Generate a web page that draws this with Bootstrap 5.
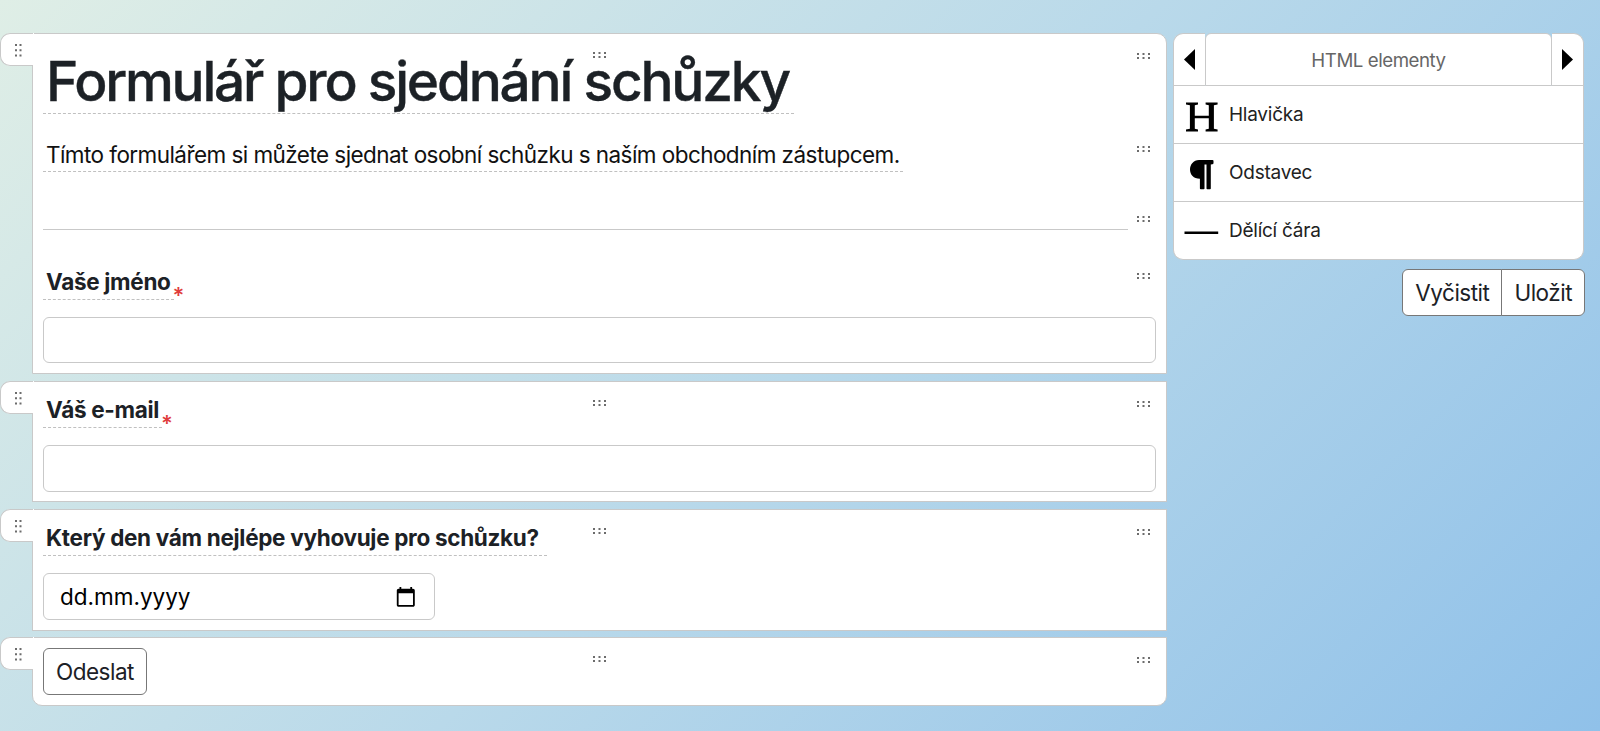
<!DOCTYPE html>
<html lang="cs">
<head>
    <meta charset="UTF-8">
    <meta name="viewport" content="width=device-width, initial-scale=1.0">
    <link href="https://cdn.jsdelivr.net/npm/bootstrap@5.3.2/dist/css/bootstrap.min.css" rel="stylesheet"/>
    <script src="https://cdn.jsdelivr.net/npm/bootstrap@5.3.2/dist/js/bootstrap.bundle.min.js"></script>
    <title>Formulář pro sjednání schůzky</title>
    <style>
        body {
            height: 731px;
            overflow: hidden;
            font-family: Inter, "Liberation Sans", sans-serif;
            font-size: 22.5px;
            color: #1c2126;
            background: linear-gradient(135deg, #dfeee6 0%, #b9d9ea 50%, #90c1e9 100%);
        }
        .builder {
            padding: 33px 16px 0 32px;
            gap: 6px;
        }
        .stage {
            width: 1135px;
        }
        .stage-row {
            position: relative;
            background: #fff;
            border: 1px solid #c9c9c9;
            padding: 0 10px;
            margin-bottom: 7px;
        }
        .stage-row:first-child { border-top-right-radius: 10px; height: 341px; }
        .stage-row:last-child { border-radius: 0 0 10px 10px; height: 69px; margin-bottom: 0; }
        .stage-row:nth-child(2) { height: 121px; }
        .stage-row:nth-child(3) { height: 122px; margin-bottom: 6px; }
        .row-tab {
            position: absolute;
            left: -33px;
            top: -1px;
            width: 33px;
            height: 33px;
            background: #fff;
            border: 1px solid #c9c9c9;
            border-right: 0;
            border-radius: 10px 0 0 10px;
            box-shadow: 1px 0 0 #fff;
            clip-path: inset(0 -1px 0 0);
            padding: 10px 0 0 14px;
        }
        .grip {
            display: block;
            fill: #6c6c6c;
        }
        .grip-center { position: absolute; left: 560px; top: 18px; }
        .grip-field { position: absolute; top: 19px; right: 15px; }
        .editable {
            display: inline-block;
            padding: 0 3px;
            border-bottom: 1px dashed #c0c0c0;
            white-space: nowrap;
        }
        .form-title {
            margin: 13px 0 23px;
            font-size: 55px;
            font-weight: 500;
            line-height: 64px;
            letter-spacing: -2.22px;
            height: 67px;
            -webkit-text-stroke: .4px #1c2126;
        }
        .form-title .editable { padding: 2px 5px 0 3px; }
        .form-intro {
            margin: 0 0 58px;
            line-height: 33px;
            letter-spacing: -.56px;
            height: 34px;
            color: #111;
        }
        .form-intro .editable { padding-top: 1px; }
        .form-rule {
            width: 1085px;
            height: 1px;
            background: #c9c9c9;
        }
        .field-label {
            display: flex;
            height: 35px;
            line-height: 34px;
            font-weight: 700;
            letter-spacing: -.31px;
            margin: 11px 0 17px;
        }
        .form-rule + .field-label { margin: 35px 0 17px; }
        .required-mark {
            color: #e03c3c;
            font-weight: 600;
            font-size: 22px;
            line-height: 60px;
            margin-left: -1px;
        }
        .field-input {
            height: 47px;
            border: 1px solid #c9c9c9;
            border-radius: 6px;
            padding: 0 17px 0 16px;
        }
        .stage-row:first-child .field-input { height: 46px; }
        .date-input {
            width: 392px;
            color: #000;
        }
        .btn-form {
            font-size: 22.5px;
            line-height: 32px;
            letter-spacing: -.5px;
            height: 47px;
            padding: 7px 12px;
            color: #1c2126;
            background: #fff;
            border: 1px solid #777;
            border-radius: 6px;
            white-space: nowrap;
        }
        .controls-panel {
            width: 411px;
        }
        .panel-head {
            height: 53px;
            font-size: 18.7px;
            letter-spacing: -.46px;
            color: #666;
        }
        .panel-head > * {
            background: #fff;
            border: 1px solid #c9c9c9;
        }
        .panel-arrow { width: 32px; }
        .arrow-prev { border-radius: 10px 0 0 0; border-right: 0 !important; }
        .arrow-next { border-radius: 0 10px 0 0; border-left: 0 !important; }
        .panel-title { border-radius: 6px 6px 0 0; }
        .panel-item {
            height: 58px;
            background: #fff;
            border: 1px solid #c9c9c9;
            border-top: 0;
            padding-left: 10px;
            gap: 9px;
            font-size: 19px;
            letter-spacing: -.25px;
            color: #222;
        }
        .panel-item span { padding-top: 2px; }
        .panel-item-last { border-radius: 0 0 10px 10px; }
        .form-actions {
            margin-top: 9px;
            margin-right: -1px;
        }
    </style>
</head>
<body>
    <!-- Shared drag handles -->
    <svg class="d-none">
        <symbol id="gripWide" viewBox="0 0 14 8">
            <path d="M0 0h2v2H0zM5.500 0h2v2h-2zM11 0h2v2h-2zM0 4h2v2H0zM5.500 4h2v2h-2zM11 4h2v2h-2z"/>
        </symbol>
        <symbol id="gripTall" viewBox="0 0 8 14">
            <path d="M0 0h2v2H0zM4.500 0h2v2h-2zM0 5.300h2v2H0zM4.500 5.300h2v2h-2zM0 10.600h2v2H0zM4.500 10.600h2v2h-2z"/>
        </symbol>
    </svg>

    <div class="builder d-flex align-items-start">
        <div class="stage flex-shrink-0">
            <div class="stage-row">
                <div class="row-tab"><svg class="grip" width="8" height="14"><use href="#gripTall"/></svg></div>
                <svg class="grip grip-center" width="14" height="8"><use href="#gripWide"/></svg>
                <svg class="grip grip-field" width="14" height="8"><use href="#gripWide"/></svg>
                <svg class="grip grip-field" style="top: 112px" width="14" height="8"><use href="#gripWide"/></svg>
                <svg class="grip grip-field" style="top: 182px" width="14" height="8"><use href="#gripWide"/></svg>
                <svg class="grip grip-field" style="top: 239px" width="14" height="8"><use href="#gripWide"/></svg>
                <h1 class="form-title"><span class="editable">Formulář pro sjednání schůzky</span></h1>
                <p class="form-intro"><span class="editable">Tímto formulářem si můžete sjednat osobní schůzku s naším obchodním zástupcem.</span></p>
                <div class="form-rule"></div>
                <div class="field-label"><span class="editable">Vaše jméno</span><span class="required-mark">*</span></div>
                <div class="field-input"></div>
            </div>

            <div class="stage-row">
                <div class="row-tab"><svg class="grip" width="8" height="14"><use href="#gripTall"/></svg></div>
                <svg class="grip grip-center" width="14" height="8"><use href="#gripWide"/></svg>
                <svg class="grip grip-field" width="14" height="8"><use href="#gripWide"/></svg>
                <div class="field-label"><span class="editable">Váš e-mail</span><span class="required-mark">*</span></div>
                <div class="field-input"></div>
            </div>

            <div class="stage-row">
                <div class="row-tab"><svg class="grip" width="8" height="14"><use href="#gripTall"/></svg></div>
                <svg class="grip grip-center" width="14" height="8"><use href="#gripWide"/></svg>
                <svg class="grip grip-field" width="14" height="8"><use href="#gripWide"/></svg>
                <div class="field-label"><span class="editable pe-2">Který den vám nejlépe vyhovuje pro schůzku?</span></div>
                <div class="field-input date-input d-flex align-items-center justify-content-between">
                    <span>dd.mm.yyyy</span>
                    <svg width="21.6" height="21.6" viewBox="0 0 24 24"><path d="M20 3h-1V1h-2v2H7V1H5v2H4c-1.100 0-2 .9-2 2v16c0 1.100.9 2 2 2h16c1.100 0 2-.9 2-2V5c0-1.100-.9-2-2-2zm0 18H4V8h16v13z"/></svg>
                </div>
            </div>

            <div class="stage-row">
                <div class="row-tab"><svg class="grip" width="8" height="14"><use href="#gripTall"/></svg></div>
                <svg class="grip grip-center" width="14" height="8"><use href="#gripWide"/></svg>
                <svg class="grip grip-field" width="14" height="8"><use href="#gripWide"/></svg>
                <div class="submit-line d-flex" style="padding-top: 10px">
                    <button type="button" class="btn btn-form">Odeslat</button>
                </div>
            </div>
        </div>

        <div class="controls-panel flex-shrink-0">
            <div class="panel-head d-flex">
                <div class="panel-arrow arrow-prev d-flex align-items-center justify-content-center">
                    <svg width="11" height="21" viewBox="0 0 11 21"><path d="M11 0v21L0 10.500z"/></svg>
                </div>
                <div class="panel-title flex-grow-1 d-flex align-items-center justify-content-center pt-1"><span>HTML elementy</span></div>
                <div class="panel-arrow arrow-next d-flex align-items-center justify-content-center">
                    <svg width="11" height="21" viewBox="0 0 11 21"><path d="M0 0v21l11-10.500z"/></svg>
                </div>
            </div>
            <div class="panel-item d-flex align-items-center">
                <svg width="36" height="34" viewBox="0 0 36 34"><path d="M2 4.500h12v2l-3.200.7v10.600h14V7.200l-3.200-.7v-2h12v2l-3.700.7v23.500l3.700.7v2h-12v-2l3.200-.7V20.200h-14v10.500l3.200.7v2H2v-2l3.900-.7V7.200L2 6.500z"/></svg>
                <span>Hlavička</span>
            </div>
            <div class="panel-item d-flex align-items-center">
                <svg width="36" height="34" viewBox="0 0 36 34"><path d="M15 4h13.500q1 0 1 1v2q0 1.200-1.200 1.200l-1.500.3v24q0 .8-.8.8h-2.700q-.8 0-.8-.8V8.500h-2v24q0 .8-.8.8h-3q-.8 0-.8-.8V22.800C9.500 22.800 6 18.500 6 13.500S9.500 4 15 4z"/></svg>
                <span>Odstavec</span>
            </div>
            <div class="panel-item panel-item-last d-flex align-items-center">
                <svg width="36" height="34" viewBox="0 0 36 34"><path d="M.5 17.500h33.700V20H.5z"/></svg>
                <span>Dělící čára</span>
            </div>
            <div class="form-actions btn-group d-flex justify-content-end">
                <button type="button" class="btn btn-form flex-grow-0">Vyčistit</button>
                <button type="button" class="btn btn-form flex-grow-0">Uložit</button>
            </div>
        </div>
    </div>
</body>
</html>
